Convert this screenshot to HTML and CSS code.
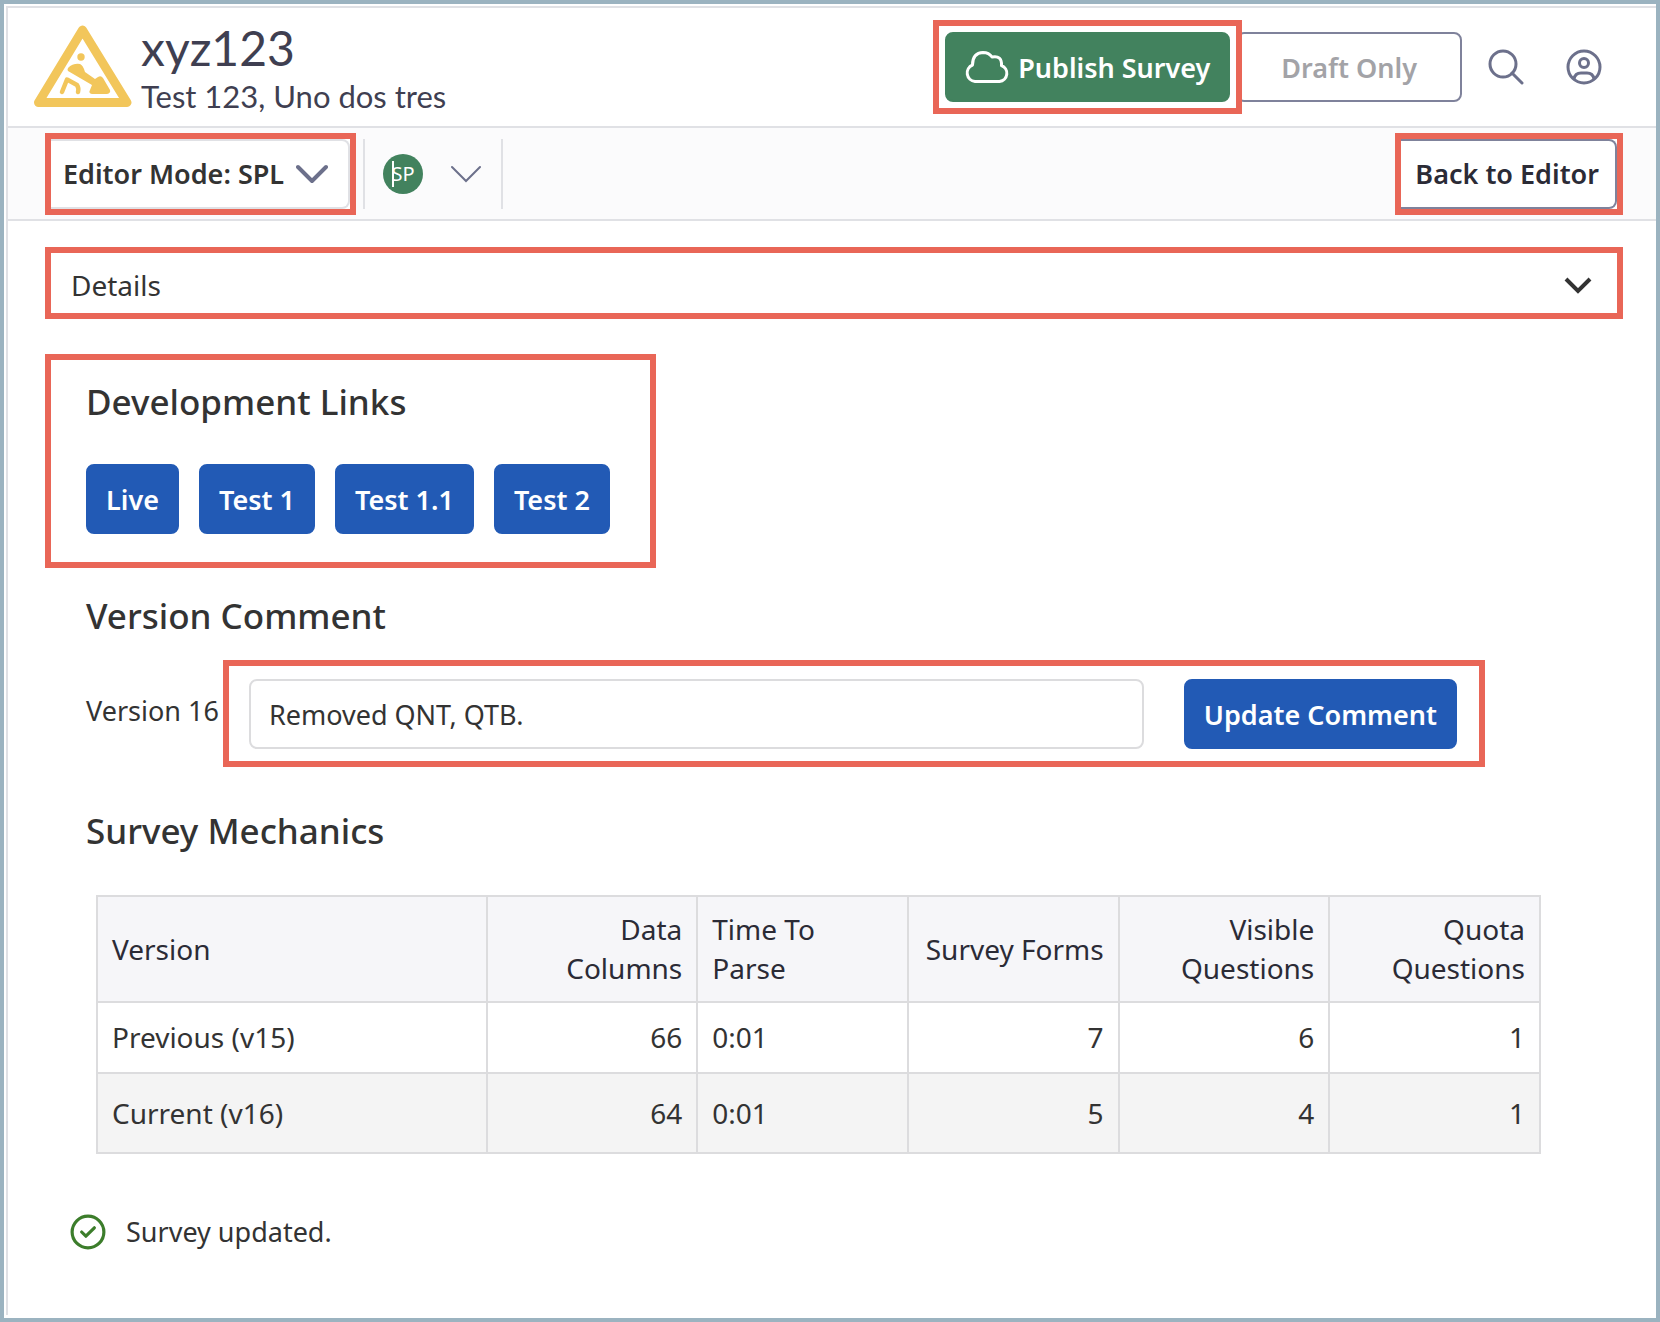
FILE: index.html
```html
<!DOCTYPE html>
<html lang="en">
	<head>
		<meta charset="utf-8">
		<title>xyz123</title>
		<link rel="stylesheet" href="styles.css">
	</head>
	<body>
		<div class="page">
			<header class="header">
				<svg class="warningIcon" viewBox="0 0 98 84" aria-hidden="true">
					<path d="M48.5 5 L93 77.5 H4.5 Z" fill="none" stroke="#f2c65b" stroke-width="9" stroke-linejoin="round"/>
					<circle cx="47" cy="32" r="3.7" fill="#f2c65b"/>
					<path d="M34 43 Q39 38 46 39 Q49 40 51 47 L61 54 L64 52 Q67 50 69 53 L76 65 Q77 68 73 69 H58 Q54 68 56 65 L58 60 L34 46 Q33 45 34 43 Z" fill="#f2c65b"/>
					<path d="M28 67 L33 54.500 L43 60 Q45 63 44 67" fill="none" stroke="#f2c65b" stroke-width="4.500" stroke-linecap="round" stroke-linejoin="round"/>
				</svg>
				<div class="titles">
					<h1>xyz123</h1>
					<p>Test 123, Uno dos tres</p>
				</div>
				<div class="marked publishMark">
					<button type="button" class="btn publish">
						<svg width="44" height="32" viewBox="0 0 44 32" fill="none" stroke="#fff" stroke-width="3" stroke-linejoin="round" aria-hidden="true">
							<path d="M10 30.500 A8.600 8.600 0 0 1 7.500 14 Q7.500 2 18 1.500 Q24 1.500 27 6 Q37 4 36.500 14.500 A8.300 8.300 0 0 1 34.500 30.500 Z"/>
						</svg>
						Publish Survey
					</button>
				</div>
				<button type="button" class="btn draft" disabled>Draft Only</button>
				<button type="button" class="iconBtn" aria-label="Search">
					<svg width="36" height="36" viewBox="0 0 36 36" fill="none" stroke="#6c708b" stroke-width="3" stroke-linecap="round" aria-hidden="true">
						<circle cx="15" cy="15" r="13"/>
						<path d="M24 24 L34 34"/>
					</svg>
				</button>
				<button type="button" class="iconBtn" aria-label="Account">
					<svg width="36" height="36" viewBox="0 0 36 36" fill="none" stroke="#6c708b" stroke-width="3" aria-hidden="true">
						<circle cx="18" cy="18" r="16"/>
						<circle cx="18" cy="14" r="4.500"/>
						<path d="M8 30 Q9 24 15 24 H21 Q27 24 28 30"/>
					</svg>
				</button>
			</header>
			<nav class="toolbar">
				<div class="marked">
					<button type="button" class="btn mode">
						Editor Mode: SPL
						<svg width="32" height="20" viewBox="0 0 32 20" fill="none" stroke="#6c708b" stroke-width="4" stroke-linecap="round" stroke-linejoin="round" aria-hidden="true"><path d="M2 3 L16 17 L30 3"/></svg>
					</button>
				</div>
				<button type="button" class="userMenu" aria-label="User menu">
					<span class="avatar"><span class="caret">SP</span></span>
					<svg width="30" height="18" viewBox="0 0 30 18" fill="none" stroke="#6c708b" stroke-width="2" stroke-linecap="round" aria-hidden="true"><path d="M1 2 L15 16 L29 2"/></svg>
				</button>
				<div class="marked backMark">
					<button type="button" class="btn back">Back to Editor</button>
				</div>
			</nav>
			<main>
				<details class="marked details">
					<summary>
						Details
						<svg width="28" height="18" viewBox="0 0 28 18" fill="none" stroke="#333" stroke-width="4" aria-hidden="true"><path d="M2 3 L14 15 L26 3"/></svg>
					</summary>
				</details>
				<section class="marked devLinks">
					<h2>Development Links</h2>
					<div class="links">
						<a href="#" class="btn primary">Live</a>
						<a href="#" class="btn primary">Test 1</a>
						<a href="#" class="btn primary">Test 1.1</a>
						<a href="#" class="btn primary">Test 2</a>
					</div>
				</section>
				<section class="section">
					<h2>Version Comment</h2>
					<form class="commentForm">
						<label for="comment">Version 16</label>
						<div class="marked commentMark">
							<input type="text" id="comment" value="Removed QNT, QTB.">
							<button type="button" class="btn primary">Update Comment</button>
						</div>
					</form>
				</section>
				<section class="section">
					<h2>Survey Mechanics</h2>
					<table>
						<thead>
							<tr>
								<th class="versionCol">Version</th>
								<th class="num">Data Columns</th>
								<th>Time To Parse</th>
								<th class="num">Survey Forms</th>
								<th class="num">Visible Questions</th>
								<th class="num">Quota Questions</th>
							</tr>
						</thead>
						<tbody>
							<tr>
								<td>Previous (v15)</td>
								<td class="num">66</td>
								<td>0:01</td>
								<td class="num">7</td>
								<td class="num">6</td>
								<td class="num">1</td>
							</tr>
							<tr class="current">
								<td>Current (v16)</td>
								<td class="num">64</td>
								<td>0:01</td>
								<td class="num">5</td>
								<td class="num">4</td>
								<td class="num">1</td>
							</tr>
						</tbody>
					</table>
				</section>
				<p class="status">
					<svg width="36" height="36" viewBox="0 0 34 34" fill="none" stroke="#3c7d2b" stroke-width="3" stroke-linecap="round" stroke-linejoin="round" aria-hidden="true">
						<circle cx="17" cy="17" r="15"/>
						<path d="M11 17 L15 21 L23 13"/>
					</svg>
					Survey updated.
				</p>
			</main>
		</div>
	</body>
</html>
```

FILE: styles.css
```css
*{
	box-sizing: border-box;
}
body{
	margin: 0;
	color: #333;
	font-family: "Noto Sans", "Open Sans", sans-serif;
	font-size: 27px;
	line-height: 39px;
}
h1, h2, p{
	margin: 0;
	font-weight: 400;
}
h2{
	font-size: 35px;
	font-weight: 500;
	line-height: 48px;
}
button, input{
	font: inherit;
	color: inherit;
}
.page{
	min-height: 100vh;
	padding: 2px 0 0 2px;
	border: 4px solid #9bb3c0;
	background: #fff;
}
/*Red outline around the parts of the page being explained*/
.marked{
	border: 6px solid #e96657;
}
.btn{
	display: inline-flex;
	align-items: center;
	justify-content: center;
	height: 70px;
	padding: 0 18px;
	border: 2px solid #7f829b;
	border-radius: 8px;
	background: #fff;
	font-weight: 600;
	text-decoration: none;
	white-space: nowrap;
}
.primary{
	border-color: #225ab5;
	background: #225ab5;
	color: #fff;
}

/*Header*/
.header{
	display: flex;
	align-items: center;
	height: 122px;
	padding: 0 54px 0 26px;
	border: solid #e0e1e5;
	border-width: 2px 0 2px 2px;
	color: #3f3f51;
	font-family: Lato, sans-serif;
}
.warningIcon{
	width: 98px;
	height: 84px;
	margin-right: 9px;
}
.titles{
	flex: 1;
	padding-top: 6px;
}
.titles h1{
	font-size: 48px;
	line-height: 52px;
}
.titles p{
	font-size: 31px;
	line-height: 44px;
}
.publishMark{
	display: flex;
	padding: 6px;
	background: #fff;
	z-index: 1;
}
.header .btn{
	font-family: "Noto Sans", sans-serif;
}
.publish{
	gap: 9px;
	border-color: #42825e;
	background: #42825e;
	color: #fff;
}
.draft{
	margin-left: -6px;
	padding: 0 43px;
	color: #a3a3a7;
}
.iconBtn{
	display: flex;
	margin-left: 26px;
	padding: 0;
	border: 0;
	background: none;
}
.iconBtn + .iconBtn{
	margin-left: 42px;
}

/*Toolbar*/
.toolbar{
	display: flex;
	align-items: center;
	height: 93px;
	padding: 0 33px 0 37px;
	border: solid #e0e1e5;
	border-width: 0 0 2px 2px;
	background: #fbfbfc;
}
.toolbar .marked{
	display: flex;
	background: #fff;
}
.toolbar .btn{
	border-left: 0;
	border-radius: 0 8px 8px 0;
}
.toolbar .mode{
	gap: 12px;
	padding: 0 20px 0 12px;
	border-color: #e0e1e5;
}
.userMenu{
	display: flex;
	align-items: center;
	gap: 28px;
	height: 70px;
	margin-left: 7px;
	padding: 0 20px 0 18px;
	border: solid #e0e1e5;
	border-width: 0 2px;
	background: none;
}
.avatar{
	display: flex;
	align-items: center;
	justify-content: center;
	width: 40px;
	height: 40px;
	border-radius: 50%;
	background: #42825e;
	color: #fff;
	font-size: 20px;
	line-height: 26px;
}
.caret{
	border-left: 2px solid #fff;
	text-indent: -2px;
}
.backMark{
	margin-left: auto;
}
.toolbar .back{
	padding: 0 16px 0 14px;
	color: #2b2b36;
}

/*Content*/
main{
	padding: 26px 33px 64px 37px;
	border-left: 2px solid #e0e1e5;
}
.details summary{
	display: flex;
	align-items: center;
	justify-content: space-between;
	height: 60px;
	padding: 4px 25px 0 20px;
	font-size: 28px;
	list-style: none;
}
.devLinks{
	width: fit-content;
	margin-top: 35px;
	padding: 18px 40px 28px 35px;
}
.links{
	display: flex;
	gap: 20px;
	margin-top: 38px;
}
.section{
	margin-top: 24px;
	padding: 0 138px 0 41px;
}
.commentForm{
	display: flex;
	align-items: center;
	gap: 4px;
	margin-top: 20px;
}
.commentForm label{
	padding-bottom: 6px;
}
.commentMark{
	display: flex;
	flex: 1;
	gap: 40px;
	padding: 13px 22px 12px 20px;
}
.commentMark input{
	flex: 1;
	min-width: 0;
	height: 70px;
	padding: 0 18px;
	border: 2px solid #dcdcde;
	border-radius: 8px;
}
.section + .section{
	margin-top: 40px;
	padding-right: 82px;
}
table{
	width: calc(100% - 10px);
	margin: 40px 0 0 10px;
	border-collapse: collapse;
	table-layout: fixed;
	font-size: 28px;
}
th, td{
	height: 71px;
	padding: 13px 14px;
	border: 2px solid #dcdcde;
	text-align: left;
}
th{
	background: #f6f6f9;
	color: #2b2b36;
	font-weight: 400;
}
.versionCol{
	width: 27%;
}
.num{
	text-align: right;
}
.current td{
	height: 80px;
	background: #f4f4f4;
}
.status{
	display: flex;
	align-items: center;
	gap: 20px;
	margin-top: 58px;
	padding-left: 25px;
}
```
